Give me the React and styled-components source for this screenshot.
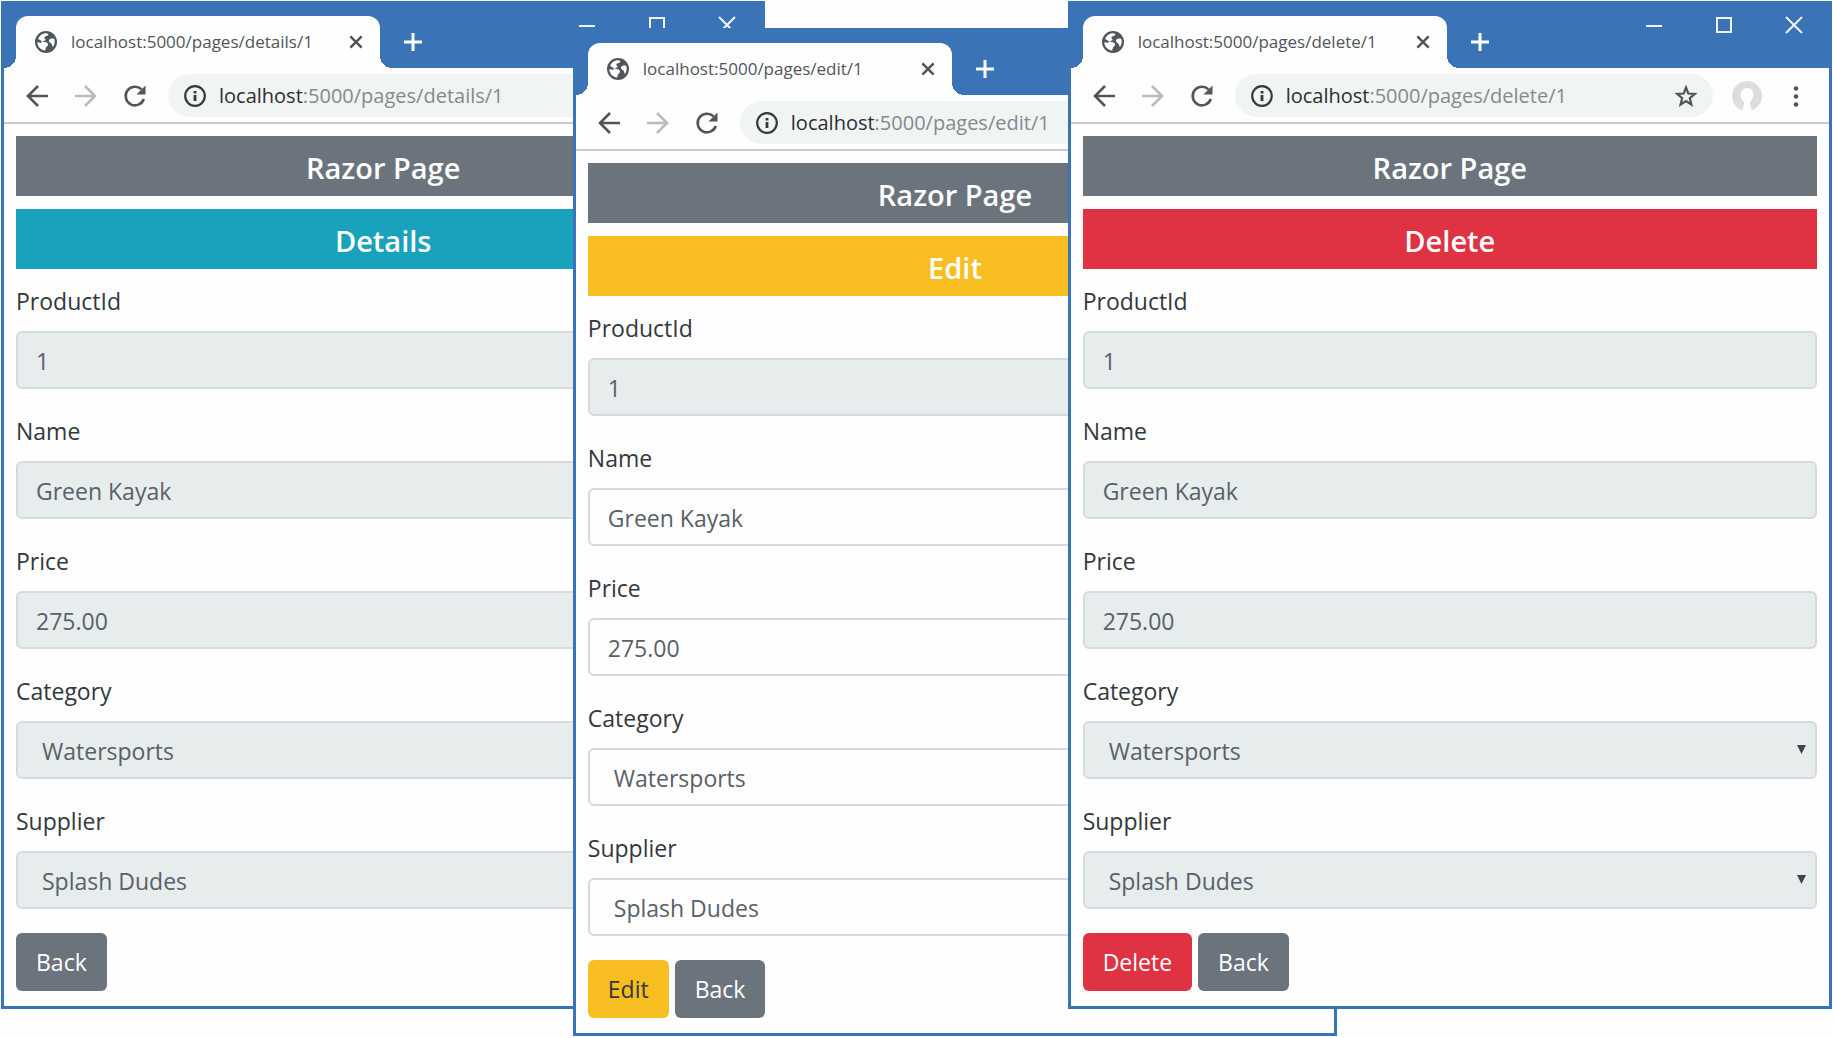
import React, { useId } from "react";
import styled, { createGlobalStyle } from "styled-components";

const GlobalStyle = createGlobalStyle`
  *, *::before, *::after { box-sizing: border-box; }
  body {
    margin: 0;
    background: #fefefe;
    color: #33383d;
    font-family: "Open Sans", "Noto Sans", sans-serif;
    font-size: 23px;
    line-height: 36px;
  }
  button, input, select { font: inherit; }
`;

const frameBlue = "#3a73b6";

const tones = {
  secondary: { bg: "#6b747d", fg: "#ffffff" },
  info: { bg: "#19a2bb", fg: "#ffffff" },
  warning: { bg: "#f8be21", fg: "#33383d" },
  danger: { bg: "#df3243", fg: "#ffffff" },
};

const Desktop = styled.main`
  position: relative;
  min-height: 1038px;
  overflow: hidden;
`;

const BrowserWindow = styled.section`
  position: absolute;
  top: ${(p) => p.$top};
  left: ${(p) => p.$left};
  right: ${(p) => p.$right};
  width: 41.7%;
  border: 3px solid ${frameBlue};
  border-top: 0;
  background: #fefefe;
`;

const TitleBar = styled.header`
  display: flex;
  align-items: flex-start;
  height: 67px;
  padding-left: 12px;
  background: ${frameBlue};
`;

const Tab = styled.div`
  position: relative;
  display: flex;
  align-items: center;
  gap: 14px;
  width: 364px;
  height: 52px;
  margin-top: 15px;
  padding: 0 12px 0 19px;
  border-radius: 12px 12px 0 0;
  background: #fefefe;
  color: #50555a;
  font-size: 17px;
  &::before, &::after {
    content: "";
    position: absolute;
    bottom: 0;
    width: 12px;
    height: 12px;
  }
  &::before {
    right: 100%;
    background: radial-gradient(circle at 0 0, ${frameBlue} 12px, #fefefe 12px);
  }
  &::after {
    left: 100%;
    background: radial-gradient(circle at 100% 0, ${frameBlue} 12px, #fefefe 12px);
  }
`;

const TabTitle = styled.span`
  flex: 1;
  white-space: nowrap;
`;

const IconButton = styled.button`
  display: grid;
  place-items: center;
  width: ${(p) => p.$width || 24}px;
  height: ${(p) => p.$height || 24}px;
  padding: 0;
  border: 0;
  background: none;
  color: ${(p) => p.$color || "#50555a"};
`;

const NewTab = styled(IconButton)`
  margin: 29px 0 0 21px;
`;

const WindowControls = styled.div`
  display: flex;
  margin-left: auto;
`;

const Toolbar = styled.div`
  display: flex;
  align-items: center;
  height: 56px;
  padding: 1px 21px 0;
  border-bottom: 2px solid #c8cacb;
`;

const Navigation = styled.nav`
  display: flex;
  gap: 25px;
  margin-right: 21px;
`;

const AddressBar = styled.div`
  flex: 1;
  display: flex;
  align-items: center;
  gap: 12px;
  height: 43px;
  padding: 0 15px;
  border-radius: 22px;
  background: #f0f5f4;
`;

const Address = styled.div`
  flex: 1;
  outline: 0;
  color: #84898f;
  font-size: 20px;
  white-space: nowrap;
`;

const Host = styled.span`
  color: #2b2e32;
`;

const ToolbarActions = styled.div`
  display: flex;
  align-items: center;
  gap: 22px;
  margin-left: 19px;
`;

const Page = styled.div`
  padding: 12px 12px 15px;
`;

const Banner = styled.h1`
  margin: 0 0 13px;
  padding: 14px 12px 10px;
  background: ${(p) => tones[p.$tone].bg};
  color: #fefefe;
  font-size: 29px;
  font-weight: 600;
  line-height: 36px;
  text-align: center;
`;

const Form = styled.form`
  display: grid;
  gap: 24px;
  padding-top: 1px;
`;

const Field = styled.div`
  display: grid;
  gap: 12px;
`;

const Label = styled.label`
  line-height: 36px;
`;

const controlStyle = `
  width: 100%;
  height: 58px;
  border: 2px solid #d5dae1;
  border-radius: 6px;
  color: #596068;
  background: #fefefe;
  opacity: 1;
  &:read-only:not(select), &:disabled { background: #e7eded; }
`;

const TextInput = styled.input`
  ${controlStyle}
  padding: 2px 18px 0;
`;

const SelectBox = styled.div`
  position: relative;
`;

const Select = styled.select`
  ${controlStyle}
  display: block;
  appearance: none;
  padding: 2px 24px 0;
`;

const Arrow = styled.svg`
  position: absolute;
  top: 24px;
  right: 11px;
  pointer-events: none;
`;

const Actions = styled.div`
  display: flex;
  gap: 6px;
`;

const Button = styled.button`
  height: 58px;
  padding: 0 20px;
  border: 0;
  border-radius: 6px;
  background: ${(p) => tones[p.$tone].bg};
  color: ${(p) => tones[p.$tone].fg};
`;

const Stroke = ({ size = 24, width = 2, children }) => (
  <svg width={size} height={size} viewBox="0 0 24 24" fill="none" stroke="currentColor" strokeWidth={width} aria-hidden="true">
    {children}
  </svg>
);

const Globe = () => (
  <svg width="22" height="22" viewBox="0 0 24 24" aria-hidden="true">
    <circle cx="12" cy="12" r="12" fill="#50555a" />
    <path fill="#fefefe" d="M12 2.500c2.600 0 3.200 1.200 2 2.400-1.500 1.200-3.400.6-3.800 2.200-.3 1.400 1.700 1.400 1.400 2.700-.4 1.300-2.800.5-3.300 2 2.800.3 5.300.5 5.900 2.600.5 1.900-1.600 2.200-2.200 3.600-.5 1.200-.5 2.500-1 3.300C6 20.500 2.600 16.700 2.500 12.200l3.700.5c1.500.2 1.700-1.300.6-2L3.400 8.800C4.700 5 8 2.500 12 2.500z" />
    <path fill="#fefefe" d="M15.500 9.500c1.200-1.400 3.200-1.600 5.300-1.200 1.300 3 .8 6.500-1.200 9.200-1-.8-.6-2.600-1.600-3.600-1.300-1.200-3.700-2.500-2.500-4.400z" />
  </svg>
);

const Info = () => (
  <Stroke>
    <circle cx="12" cy="12" r="9.800" strokeWidth="2.200" />
    <path d="M12 11v6M12 7v2.500" strokeWidth="2.800" />
  </Stroke>
);

const Avatar = () => (
  <svg width="30" height="30" viewBox="0 0 30 30" aria-hidden="true">
    <circle cx="15" cy="15" r="15" fill="#dcdddd" />
    <path fill="#fefefe" d="M15 7c4 0 6.300 2.800 6.300 6.800 0 3-1.300 5.700-3.300 7.200v2.500l2 6.500H10l2-6.500V21c-2-1.500-3.300-4.200-3.300-7.200C8.700 9.800 11 7 15 7z" />
  </svg>
);

const fields = [
  { name: "ProductId", value: "1", locked: true },
  { name: "Name", value: "Green Kayak" },
  { name: "Price", value: "275.00" },
  { name: "Category", value: "Watersports", choice: true },
  { name: "Supplier", value: "Splash Dudes", choice: true },
];

function ProductField({ field, readOnly }) {
  const id = useId();
  const locked = readOnly || field.locked;
  return (
    <Field>
      <Label htmlFor={id}>{field.name}</Label>
      {field.choice ? (
        <SelectBox>
          <Select id={id} disabled={locked} defaultValue={field.value}>
            <option>{field.value}</option>
          </Select>
          <Arrow width="9" height="9" viewBox="0 0 9 9" aria-hidden="true">
            <path d="M0 0h9L4.500 9z" fill="#3f4449" />
          </Arrow>
        </SelectBox>
      ) : (
        <TextInput id={id} readOnly={locked} defaultValue={field.value} />
      )}
    </Field>
  );
}

function ProductWindow({ action, tone, readOnly, submit, ...place }) {
  const path = `/pages/${action.toLowerCase()}/1`;
  return (
    <BrowserWindow {...place} aria-label={action}>
      <TitleBar>
        <Tab>
          <Globe />
          <TabTitle>localhost:5000{path}</TabTitle>
          <IconButton type="button" aria-label="Close tab">
            <Stroke size={18} width={3.4}><path d="M4.500 4.500l15 15M19.500 4.500l-15 15" /></Stroke>
          </IconButton>
        </Tab>
        <NewTab type="button" aria-label="New tab" $color="#fefefe">
          <Stroke width={3}><path d="M12 3v18M3 12h18" /></Stroke>
        </NewTab>
        <WindowControls>
          <IconButton type="button" aria-label="Minimize" $width={70} $height={48} $color="#f1f4f8">
            <Stroke><path d="M4 13h16" /></Stroke>
          </IconButton>
          <IconButton type="button" aria-label="Maximize" $width={70} $height={48} $color="#f1f4f8">
            <Stroke><path d="M5 5h14v14H5z" /></Stroke>
          </IconButton>
          <IconButton type="button" aria-label="Close" $width={70} $height={48} $color="#f1f4f8">
            <Stroke><path d="M4 4l16 16M20 4L4 20" /></Stroke>
          </IconButton>
        </WindowControls>
      </TitleBar>
      <Toolbar>
        <Navigation>
          <IconButton type="button" aria-label="Back">
            <Stroke width={2.600}><path d="M23 12H3M13 2L3 12l10 10" /></Stroke>
          </IconButton>
          <IconButton type="button" aria-label="Forward" $color="#b9bbbd">
            <Stroke width={2.600}><path d="M1 12h20M11 2l10 10-10 10" /></Stroke>
          </IconButton>
          <IconButton type="button" aria-label="Reload">
            <Stroke width={2.600}>
              <path d="M20.800 15A9.300 9.300 0 1 1 18.500 5.400" />
              <path d="M22.500 1.500v9h-9z" fill="currentColor" stroke="none" />
            </Stroke>
          </IconButton>
        </Navigation>
        <AddressBar>
          <Info />
          <Address role="textbox" aria-label="Address" contentEditable suppressContentEditableWarning spellCheck={false}>
            <Host>localhost</Host>:5000{path}
          </Address>
          <IconButton type="button" aria-label="Bookmark">
            <Stroke width={2.200}><path d="M12 3.500l2.300 6 6.500.4-5 4.200 1.600 6.400L12 17l-5.400 3.500 1.600-6.400-5-4.200 6.500-.4z" /></Stroke>
          </IconButton>
        </AddressBar>
        <ToolbarActions>
          <IconButton type="button" aria-label="Profile" $width={30} $height={30}><Avatar /></IconButton>
          <IconButton type="button" aria-label="Menu">
            <svg width="24" height="24" viewBox="0 0 24 24" fill="currentColor" aria-hidden="true">
              <circle cx="12" cy="4.500" r="2.300" /><circle cx="12" cy="12.500" r="2.300" /><circle cx="12" cy="20.500" r="2.300" />
            </svg>
          </IconButton>
        </ToolbarActions>
      </Toolbar>
      <Page>
        <Banner $tone="secondary">Razor Page</Banner>
        <Banner as="h2" $tone={tone}>{action}</Banner>
        <Form onSubmit={(e) => e.preventDefault()}>
          {fields.map((field) => (
            <ProductField key={field.name} field={field} readOnly={readOnly} />
          ))}
          <Actions>
            {submit && <Button $tone={tone}>{action}</Button>}
            <Button type="button" $tone="secondary">Back</Button>
          </Actions>
        </Form>
      </Page>
    </BrowserWindow>
  );
}

export default function App() {
  return (
    <>
      <GlobalStyle />
      <Desktop>
        <ProductWindow action="Details" tone="info" readOnly $top="1px" $left="1px" />
        <ProductWindow action="Edit" tone="warning" submit $top="28px" $left="31.25%" />
        <ProductWindow action="Delete" tone="danger" readOnly submit $top="1px" $right="1px" />
      </Desktop>
    </>
  );
}
